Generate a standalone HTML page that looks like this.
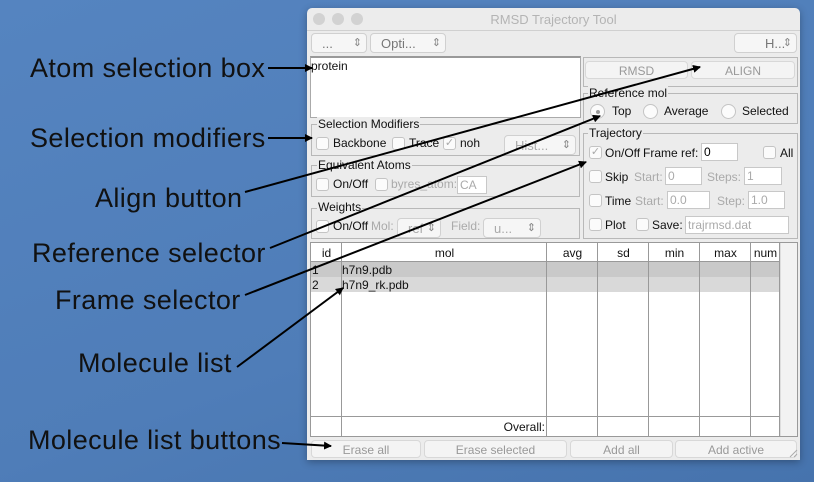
<!DOCTYPE html>
<html><head><meta charset="utf-8"><style>
*{box-sizing:border-box;margin:0;padding:0}
body{width:814px;height:482px;overflow:hidden;background:linear-gradient(160deg,#5584c0 0%,#4f7db8 60%,#4673ad 100%);font-family:"Liberation Sans",sans-serif;position:relative}
.a{position:absolute}
.lbl{position:absolute;font-size:27px;line-height:30px;color:#111;white-space:nowrap;letter-spacing:0.4px}
.win{position:absolute;left:307px;top:8px;width:493px;height:452px;background:#ececec;border-radius:5px 5px 0 0;box-shadow:0 2px 8px rgba(0,0,0,.3)}
.t{position:absolute;font-size:12px;color:#111;white-space:nowrap}
.g{color:#aaa}
.box{position:absolute;border:1px solid #b8b8b8}
.cb{position:absolute;width:13px;height:13px;border:1px solid #c4c4c4;border-radius:3px;background:#fbfbfb;font-size:11px;color:#aaa;line-height:11px;text-align:center}
.rb{position:absolute;width:15px;height:15px;border:1px solid #c4c4c4;border-radius:50%;background:#fbfbfb}
.pop{position:absolute;height:20px;border:1px solid #d0d0d0;border-radius:4px;background:#f6f6f6;font-size:13px;color:#777;padding:2px 0 0 10px}
.pop:after{content:"⇕";position:absolute;right:4px;top:2px;font-size:11px;color:#888}
.in{position:absolute;height:18px;border:1px solid #c8c8c8;background:#fff;font-size:12px;padding:1px 2px}
.btn{position:absolute;height:18px;border:1px solid #d8d8d8;border-radius:4px;background:#f4f4f4;font-size:12px;color:#999;text-align:center;padding-top:2px}
.col{position:absolute;top:243px;border-right:1px solid #999;height:193px}
</style></head><body>
<div class="lbl" style="left:30px;top:53px">Atom selection box</div>
<div class="lbl" style="left:30px;top:123px">Selection modifiers</div>
<div class="lbl" style="left:95px;top:183px">Align button</div>
<div class="lbl" style="left:32px;top:238px">Reference selector</div>
<div class="lbl" style="left:55px;top:285px">Frame selector</div>
<div class="lbl" style="left:78px;top:348px">Molecule list</div>
<div class="lbl" style="left:28px;top:425px">Molecule list buttons</div>

<div class="win">
 <div class="a" style="left:6px;top:5px;width:12px;height:12px;border-radius:50%;background:#d2d2d2"></div>
 <div class="a" style="left:25px;top:5px;width:12px;height:12px;border-radius:50%;background:#d2d2d2"></div>
 <div class="a" style="left:44px;top:5px;width:12px;height:12px;border-radius:50%;background:#d2d2d2"></div>
 <div class="t" style="left:0;width:493px;text-align:center;top:4px;font-size:13px;color:#b4b4b4">RMSD Trajectory Tool</div>
 <div class="a" style="left:0;top:22px;width:493px;height:1px;background:#d0d0d0"></div>
 <div class="pop" style="left:4px;top:25px;width:56px">...</div>
 <div class="pop" style="left:63px;top:25px;width:76px">Opti...</div>
 <div class="pop" style="left:427px;top:25px;width:63px;padding-left:30px">H...</div>
</div>
<div class="a" style="left:310px;top:56px;width:271px;height:62px;background:#fff;border:1px solid #aaa;border-top:2px solid #999"></div>
<div class="t" style="left:311px;top:59px">protein</div>
<div class="box" style="left:311px;top:124px;width:269px;height:32px"></div>
<div class="t" style="left:317px;top:117px;background:#ececec;padding:0 1px">Selection Modifiers</div>
<div class="cb" style="left:316px;top:137px"></div><div class="t" style="left:333px;top:136px">Backbone</div>
<div class="cb" style="left:392px;top:137px"></div><div class="t" style="left:409px;top:136px">Trace</div>
<div class="cb" style="left:443px;top:137px">✓</div><div class="t" style="left:460px;top:136px">noh</div>
<div class="pop" style="left:504px;top:135px;width:72px;color:#aaa">Hist...</div>
<div class="box" style="left:311px;top:165px;width:269px;height:32px"></div>
<div class="t" style="left:317px;top:158px;background:#ececec;padding:0 1px">Equivalent Atoms</div>
<div class="cb" style="left:316px;top:178px"></div><div class="t" style="left:333px;top:177px">On/Off</div>
<div class="cb" style="left:375px;top:178px"></div><div class="t g" style="left:391px;top:177px">byres_atom:</div>
<div class="in" style="left:457px;top:176px;width:30px;color:#aaa">CA</div>
<div class="box" style="left:311px;top:208px;width:269px;height:31px"></div>
<div class="t" style="left:317px;top:200px;background:#ececec;padding:0 1px">Weights</div>
<div class="cb" style="left:316px;top:220px"></div><div class="t" style="left:333px;top:219px">On/Off</div>
<div class="t g" style="left:371px;top:219px">Mol:</div>
<div class="pop" style="left:397px;top:218px;width:44px;color:#aaa">ref</div>
<div class="t g" style="left:451px;top:219px">Field:</div>
<div class="pop" style="left:483px;top:218px;width:58px;color:#aaa">u...</div>
<div class="box" style="left:583px;top:57px;width:215px;height:30px"></div>
<div class="btn" style="left:585px;top:61px;width:103px">RMSD</div>
<div class="btn" style="left:691px;top:61px;width:104px">ALIGN</div>
<div class="box" style="left:583px;top:93px;width:215px;height:31px"></div>
<div class="t" style="left:588px;top:86px;background:#ececec;padding:0 1px">Reference mol</div>
<div class="rb" style="left:590px;top:104px"><div class="a" style="left:5px;top:5px;width:4px;height:4px;border-radius:50%;background:#999"></div></div>
<div class="t" style="left:612px;top:104px">Top</div>
<div class="rb" style="left:643px;top:104px"></div><div class="t" style="left:664px;top:104px">Average</div>
<div class="rb" style="left:721px;top:104px"></div><div class="t" style="left:742px;top:104px">Selected</div>
<div class="box" style="left:583px;top:133px;width:215px;height:106px"></div>
<div class="t" style="left:588px;top:126px;background:#ececec;padding:0 1px">Trajectory</div>
<div class="cb" style="left:589px;top:146px">✓</div>
<div class="t" style="left:605px;top:146px">On/Off</div><div class="t" style="left:643px;top:146px">Frame ref:</div>
<div class="in" style="left:701px;top:143px;width:37px">0</div>
<div class="cb" style="left:763px;top:146px"></div><div class="t" style="left:780px;top:146px">All</div>
<div class="cb" style="left:589px;top:170px"></div><div class="t" style="left:605px;top:170px">Skip</div>
<div class="t g" style="left:634px;top:170px">Start:</div><div class="in" style="left:665px;top:167px;width:37px;color:#aaa">0</div>
<div class="t g" style="left:707px;top:170px">Steps:</div><div class="in" style="left:744px;top:167px;width:38px;color:#aaa">1</div>
<div class="cb" style="left:589px;top:194px"></div><div class="t" style="left:605px;top:194px">Time</div>
<div class="t g" style="left:635px;top:194px">Start:</div><div class="in" style="left:667px;top:191px;width:43px;color:#aaa">0.0</div>
<div class="t g" style="left:717px;top:194px">Step:</div><div class="in" style="left:748px;top:191px;width:37px;color:#aaa">1.0</div>
<div class="cb" style="left:589px;top:218px"></div><div class="t" style="left:605px;top:218px">Plot</div>
<div class="cb" style="left:636px;top:218px"></div><div class="t" style="left:652px;top:218px">Save:</div>
<div class="in" style="left:685px;top:216px;width:104px;color:#aaa">trajrmsd.dat</div>
<div class="a" style="left:310px;top:242px;width:488px;height:195px;background:#fff;border:1px solid #999"></div>
<div class="a" style="left:780px;top:243px;width:17px;height:193px;background:#f2f2f2;border-left:1px solid #ddd"></div>
<div class="a" style="left:311px;top:262px;width:469px;height:15px;background:#c9c9c9"></div>
<div class="a" style="left:311px;top:277px;width:469px;height:15px;background:#d9d9d9"></div>
<div class="a" style="left:311px;top:261px;width:469px;height:1px;background:#999"></div>
<div class="a" style="left:311px;top:416px;width:469px;height:1px;background:#999"></div>
<div class="col" style="left:311px;width:31px"></div>
<div class="col" style="left:342px;width:205px"></div>
<div class="col" style="left:547px;width:51px"></div>
<div class="col" style="left:598px;width:51px"></div>
<div class="col" style="left:649px;width:51px"></div>
<div class="col" style="left:700px;width:51px"></div>
<div class="col" style="left:751px;width:29px"></div>
<div class="t" style="left:311px;width:31px;text-align:center;top:246px">id</div>
<div class="t" style="left:342px;width:205px;text-align:center;top:246px">mol</div>
<div class="t" style="left:547px;width:51px;text-align:center;top:246px">avg</div>
<div class="t" style="left:598px;width:51px;text-align:center;top:246px">sd</div>
<div class="t" style="left:649px;width:51px;text-align:center;top:246px">min</div>
<div class="t" style="left:700px;width:51px;text-align:center;top:246px">max</div>
<div class="t" style="left:751px;width:29px;text-align:center;top:246px">num</div>
<div class="t" style="left:312px;top:263px">1</div><div class="t" style="left:342px;top:263px">h7n9.pdb</div>
<div class="t" style="left:312px;top:278px">2</div><div class="t" style="left:342px;top:278px">h7n9_rk.pdb</div>
<div class="t" style="left:342px;width:203px;text-align:right;top:420px">Overall:</div>
<div class="btn" style="left:311px;top:440px;width:110px">Erase all</div>
<div class="btn" style="left:424px;top:440px;width:143px">Erase selected</div>
<div class="btn" style="left:570px;top:440px;width:103px">Add all</div>
<div class="btn" style="left:675px;top:440px;width:122px">Add active</div>
<svg class="a" style="left:0;top:0" width="814" height="482">
<defs><marker id="m" markerWidth="8" markerHeight="8" refX="7" refY="4" orient="auto" markerUnits="userSpaceOnUse"><path d="M0,0 L8,4 L0,8z" fill="#000"/></marker></defs>
<g stroke="#000" stroke-width="2" fill="none">
<line x1="268" y1="68" x2="312" y2="68" marker-end="url(#m)"/>
<line x1="268" y1="138" x2="312" y2="138" marker-end="url(#m)"/>
<line x1="245" y1="192" x2="700" y2="67" marker-end="url(#m)"/>
<line x1="270" y1="248" x2="600" y2="116" marker-end="url(#m)"/>
<line x1="245" y1="295" x2="586" y2="162" marker-end="url(#m)"/>
<line x1="237" y1="367" x2="343" y2="288" marker-end="url(#m)"/>
<line x1="282" y1="443" x2="331" y2="446" marker-end="url(#m)"/>
</g>
<g stroke="#aaa" stroke-width="1"><line x1="790" y1="457" x2="797" y2="450"/><line x1="794" y1="457" x2="797" y2="454"/></g>
</svg>
</body></html>
